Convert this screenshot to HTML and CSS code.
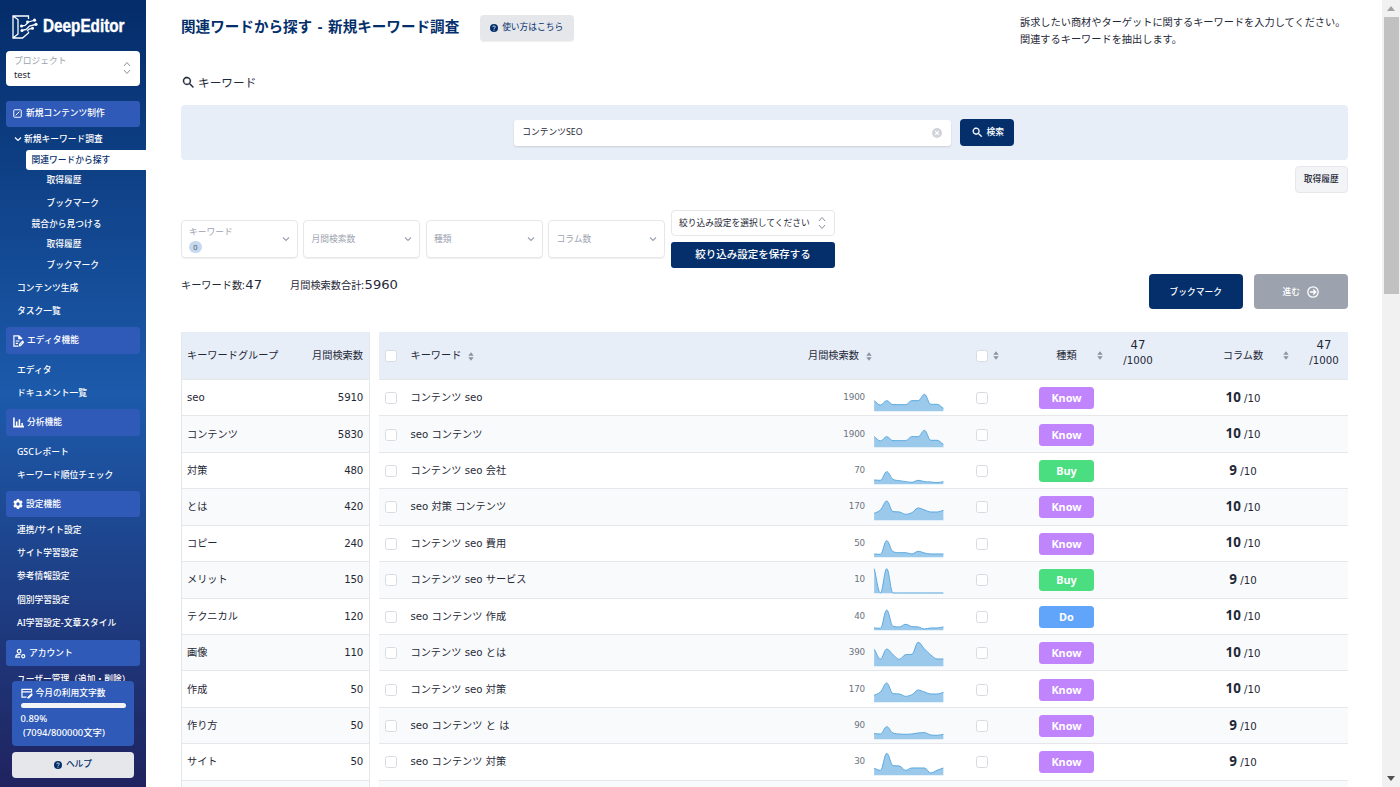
FILE: index.html
```html
<!DOCTYPE html>
<html lang="ja">
  <head>
    <meta charset="utf-8">
    <title>関連ワードから探す - DeepEditor</title>
    <link rel="stylesheet" href="styles.css">
  </head>

  <body>
    <svg class="defs">
      <symbol id="search" viewBox="0 0 24 24"><path d="M15.500 14h-.8l-.3-.3A6.500 6.500 0 1 0 13.700 14.400l.3.300v.8l5 5 1.500-1.500zm-6 0a4.500 4.500 0 1 1 0-9 4.500 4.500 0 0 1 0 9z" stroke="currentColor" stroke-width=".4"/></symbol>
      <symbol id="question" viewBox="0 0 16 16"><circle cx="8" cy="8" r="8"/><path d="M5.500 6.200a2.500 2.300 0 1 1 3.700 2Q8 8.800 8 9.800M8 11.300v2" fill="none" stroke="#e5e7eb" stroke-width="1.900"/></symbol>
      <symbol id="sort" viewBox="0 0 6 10"><path d="M0 4.200 3 .4l3 3.800zM0 5.800h6L3 9.600z"/></symbol>
      <symbol id="updown" viewBox="0 0 8 14"><path d="M1 5l3-3.500L7 5M1 9l3 3.500L7 9" fill="none" stroke="currentColor"/></symbol>
      <symbol id="down" viewBox="0 0 8 8"><path d="M1 2.500l3 3 3-3" fill="none" stroke="currentColor" stroke-width="1.200"/></symbol>
    </svg>

    <div class="app">
      <aside class="sidebar">
        <div class="logo">
          <svg class="outline" viewBox="0 0 26 24" width="26" height="24">
            <path d="M16.500 4V1H1v22h9.500l6-5v-1.500M1 1l5 3.500v14.500L1 23" />
            <path d="M9 11l4-.5 3.500-3.500 5-1.500M10 15.500l4-1 3.500-3.500 6-1.500M15 16l2-2 3.500-.7" />
            <g class="solid"><circle cx="9.500" cy="11" r="1.500"/><circle cx="10" cy="15.500" r="1.500"/><circle cx="22.500" cy="5.200" r="1.600"/><circle cx="24" cy="9.300" r="1.600"/><circle cx="15.500" cy="7" r="1.400"/><circle cx="20.500" cy="13.300" r="1.500"/></g>
          </svg>
          <span>DeepEditor</span>
        </div>

        <div class="project">
          <div>
            <div class="project-label">プロジェクト</div>
            <div>test</div>
          </div>
          <svg class="updown"><use href="#updown"/></svg>
        </div>

        <nav class="nav">
          <div class="section first">
            <svg class="outline" viewBox="0 0 12 12" width="9" height="9"><rect x="1" y="1" width="10" height="10" rx="1"/><path d="M3.500 8.500 8.500 3.500"/></svg>
            新規コンテンツ制作
          </div>
          <div class="item parent"><svg width="8" height="8"><use href="#down"/></svg>新規キーワード調査</div>
          <div class="item selected">関連ワードから探す</div>
          <div class="item leaf after-selected">取得履歴</div>
          <div class="item leaf wide">ブックマーク</div>
          <div class="item sub">競合から見つける</div>
          <div class="item leaf">取得履歴</div>
          <div class="item leaf">ブックマーク</div>
          <div class="item">コンテンツ生成</div>
          <div class="item">タスク一覧</div>

          <div class="section">
            <svg class="outline" viewBox="0 0 12 13" width="11" height="12"><path d="M9.500 4.500V3.800L6.500 1H1v11h4.500M6.300 1v3h3M3 6.500h4M3 9h2.500"/><path d="M6.800 11.800l.4-1.800 3.300-3.300 1 1.200-3.200 3.400z"/></svg>
            エディタ機能
          </div>
          <div class="item start">エディタ</div>
          <div class="item">ドキュメント一覧</div>

          <div class="section">
            <svg class="outline bars" viewBox="0 0 12 11" width="11" height="11"><path d="M1 0v10h11M4 4.500V9M7 2v7M10 6v3"/></svg>
            分析機能
          </div>
          <div class="item start">GSCレポート</div>
          <div class="item">キーワード順位チェック</div>

          <div class="section">
            <svg viewBox="0 0 12 12" width="10" height="10"><path fill-rule="evenodd" d="M4.700 0h2.600l.4 1.600 1 .6 1.600-.5 1.300 2.300-1.200 1.200v1.600l1.200 1.200-1.300 2.300-1.600-.5-1 .6-.4 1.600H4.700l-.4-1.600-1-.6-1.600.5L.400 8l1.200-1.200V5.200L.400 4l1.300-2.300 1.600.5 1-.6zM6 4a2 2 0 1 0 0 4 2 2 0 0 0 0-4z"/></svg>
            設定機能
          </div>
          <div class="item settings-start">連携/サイト設定</div>
          <div class="item">サイト学習設定</div>
          <div class="item">参考情報設定</div>
          <div class="item">個別学習設定</div>
          <div class="item">AI学習設定-文章スタイル</div>

          <div class="section account">
            <svg class="outline" viewBox="0 0 12 12" width="11" height="11"><circle cx="4.500" cy="3.500" r="2"/><path d="M5.500 10H.800Q.800 7 4.500 7H6"/><circle cx="9" cy="9" r="1.700"/></svg>
            アカウント
          </div>
          <div class="item user">ユーザー管理（追加・削除）</div>
        </nav>

        <div class="usage">
          <div class="usage-title">
            <svg class="outline" viewBox="0 0 13 12" width="12" height="11"><path d="M6 10H1V1.500h10.500V5M1 4.300h10.500"/><path d="M7 10.800 12 5.800M7 10.800h1.500L12.500 7"/></svg>
            今月の利用文字数
          </div>
          <div class="bar"></div>
          <div class="usage-text">0.89%</div>
          <div class="usage-text count">(7094/800000文字)</div>
        </div>
        <div class="help"><svg width="8" height="8"><use href="#question"/></svg>ヘルプ</div>
      </aside>

      <main class="main">
        <header class="top">
          <h1>関連ワードから探す - 新規キーワード調査</h1>
          <button class="howto"><svg width="8" height="8"><use href="#question"/></svg>使い方はこちら</button>
          <p class="lead">訴求したい商材やターゲットに関するキーワードを入力してください。<br>関連するキーワードを抽出します。</p>
        </header>

        <div class="field-label"><svg width="15" height="15"><use href="#search"/></svg>キーワード</div>
        <div class="search-panel">
          <div class="search-input">
            コンテンツSEO
            <svg class="clear" viewBox="0 0 10 10" width="10" height="10"><circle cx="5" cy="5" r="5"/><path d="M3.200 3.200l3.600 3.600M6.800 3.200 3.200 6.800" stroke="#fff" stroke-width="1.200"/></svg>
          </div>
          <button class="primary search-button"><svg width="13" height="13"><use href="#search"/></svg>検索</button>
        </div>
        <div class="history-row"><button class="history">取得履歴</button></div>

        <div class="filters">
          <div class="filter">
            <div>キーワード<span class="pill">0</span></div>
            <svg width="8" height="8"><use href="#down"/></svg>
          </div>
          <div class="filter">月間検索数<svg width="8" height="8"><use href="#down"/></svg></div>
          <div class="filter">種類<svg width="8" height="8"><use href="#down"/></svg></div>
          <div class="filter">コラム数<svg width="8" height="8"><use href="#down"/></svg></div>
          <div class="preset">
            <div class="preset-select">絞り込み設定を選択してください<svg class="updown"><use href="#updown"/></svg></div>
            <button class="primary preset-save">絞り込み設定を保存する</button>
          </div>
        </div>

        <div class="summary">
          <div>キーワード数:<span class="big">47</span></div>
          <div>月間検索数合計:<span class="big">5960</span></div>
          <button class="primary action">ブックマーク</button>
          <button class="action disabled">進む
            <svg class="outline" viewBox="0 0 12 12" width="12" height="12"><circle cx="6" cy="6" r="5.200"/><path d="M3 6h5.500M6.300 3.500 8.800 6 6.300 8.500"/></svg>
          </button>
        </div>

        <div class="tables">
          <div class="groups" id="groups">
            <div class="group head"><span>キーワードグループ</span><span>月間検索数</span></div>
          </div>
          <div class="keywords" id="keywords">
            <div class="row head">
              <i class="check"></i>
              <span class="word">キーワード<svg class="sort"><use href="#sort"/></svg></span>
              <span class="volume-head">月間検索数<svg class="sort"><use href="#sort"/></svg></span>
              <span class="pick"><i class="check"></i><svg class="sort"><use href="#sort"/></svg></span>
              <span class="type">種類</span>
              <svg class="sort type-sort"><use href="#sort"/></svg>
              <span class="limit"><b>47</b>/1000</span>
              <span class="columns">コラム数</span>
              <svg class="sort columns-sort"><use href="#sort"/></svg>
              <span class="limit last"><b>47</b>/1000</span>
            </div>
          </div>
        </div>
      </main>

      <div class="scrollbar">
        <svg class="scroll-up" viewBox="0 0 8 5" width="8" height="5"><path d="M0 5 4 0l4 5z"/></svg>
        <div class="thumb"></div>
        <svg class="scroll-down" viewBox="0 0 8 5" width="8" height="5"><path d="M0 0h8L4 5z"/></svg>
      </div>
    </div>

    <script>
      const groups = [
        ['seo', 5910], ['コンテンツ', 5830], ['対策', 480], ['とは', 420], ['コピー', 240], ['メリット', 150],
        ['テクニカル', 120], ['画像', 110], ['作成', 50], ['作り方', 50], ['サイト', 50], ['', '']
      ];

      const high = [32, 19, 32, 20, 20, 20, 32, 32, 51, 21, 21, 9];
      const middle = [21, 31, 58, 26, 25, 18, 23, 37, 31, 25, 25, 30];
      const keywords = [
        ['コンテンツ seo', 1900, 'Know', 10, high],
        ['seo コンテンツ', 1900, 'Know', 10, high],
        ['コンテンツ seo 会社', 70, 'Buy', 9, [13, 12, 38, 15, 11, 8, 6, 12, 8, 7, 5, 8]],
        ['seo 対策 コンテンツ', 170, 'Know', 10, middle],
        ['コンテンツ seo 費用', 50, 'Know', 10, [10, 9, 50, 17, 14, 14, 10, 18, 13, 10, 10, 10]],
        ['コンテンツ seo サービス', 10, 'Buy', 9, [74, 1, 74, 1, 1, 1, 1, 1, 1, 1, 1, 1]],
        ['seo コンテンツ 作成', 40, 'Do', 10, [7, 6, 61, 12, 10, 18, 11, 10, 4, 7, 7, 10]],
        ['コンテンツ seo とは', 390, 'Know', 10, [51, 22, 52, 35, 21, 35, 36, 72, 52, 34, 22, 22]],
        ['コンテンツ seo 対策', 170, 'Know', 10, middle],
        ['seo コンテンツ と は', 90, 'Know', 9, [17, 16, 38, 19, 16, 15, 16, 19, 20, 13, 12, 15]],
        ['seo コンテンツ 対策', 30, 'Know', 9, [21, 15, 66, 29, 28, 15, 22, 22, 22, 7, 15, 22]]
      ];

      // flat at peaks and valleys, otherwise the mean slope of both sides
      function slope(values, i) {
        if (i == 0) return values[1] - values[0];
        if (i == values.length - 1) return values[i] - values[i - 1];
        const before = values[i] - values[i - 1];
        const after = values[i + 1] - values[i];
        if (before * after <= 0) return 0;
        return Math.sign(before) * Math.min(Math.abs(before + after) / 2, 3 * Math.abs(before), 3 * Math.abs(after));
      }

      // monthly trend as a smoothed area, one point per month
      function sparkline(values) {
        const step = 208 / 11;
        let line = 'M0 ' + (76 - values[0]);
        for (let i = 1; i < values.length; i++) {
          const y1 = 76 - values[i - 1] - slope(values, i - 1) / 3;
          const y2 = 76 - values[i] + slope(values, i) / 3;
          line += ` C${(i - 0.62) * step} ${y1} ${(i - 0.38) * step} ${y2} ${i * step} ${76 - values[i]}`;
        }
        return `<svg class="spark" viewBox="0 0 208 76"><path class="area" d="${line} V76 H0z"/><path class="line" d="${line}"/></svg>`;
      }

      document.querySelector('#groups').insertAdjacentHTML('beforeend', groups.map(([name, volume]) =>
        `<div class="group"><span>${name}</span><span class="num">${volume}</span></div>`).join(''));

      document.querySelector('#keywords').insertAdjacentHTML('beforeend', keywords.map(([word, volume, type, count, trend]) =>
        `<div class="row">
          <i class="check"></i>
          <span class="word">${word}</span>
          <span class="volume">${volume}</span>
          ${sparkline(trend)}
          <span class="pick"><i class="check"></i></span>
          <span class="type badge ${type.toLowerCase()}">${type}</span>
          <span class="columns"><b>${count}</b> /10</span>
        </div>`).join('') + '<div class="row"></div>');
    </script>
  </body>
</html>
```
FILE: styles.css
```css
* {
  box-sizing: border-box;
}

body {
  margin: 0;
  overflow: hidden;
  background: #fff;
  color: #1f2937;
  font-family: "Noto Sans", "Noto Sans CJK JP", sans-serif;
  font-size: 8.750px;
  line-height: 1.5;
}

button {
  border: 0;
  padding: 0;
  font: inherit;
  color: inherit;
  display: flex;
  align-items: center;
  justify-content: center;
}

svg {
  fill: currentColor;
  flex: none;
}

.outline {
  fill: none;
  stroke: #fff;
  stroke-width: 1.300;
}

.bars {
  stroke-width: 1.700;
}

.defs {
  display: none;
}

.app {
  display: flex;
  height: 787px;
}

/* sidebar */

.sidebar {
  width: 146px;
  height: 787px;
  display: flex;
  flex-direction: column;
  flex: none;
  background: linear-gradient(#042c69, #1c5aab 50%, #20235f);
  color: #fff;
  font-weight: 500;
}

.logo {
  display: flex;
  align-items: center;
  gap: 5px;
  height: 50.500px;
  padding: 3px 0 0 12px;
}

.logo .solid {
  fill: #fff;
  stroke: none;
}

.logo span {
  font: bold 17.800px "Liberation Sans", sans-serif;
  -webkit-text-stroke: .4px #fff;
  transform: scaleX(.86);
  transform-origin: left;
}

.project {
  display: flex;
  justify-content: space-between;
  align-items: center;
  flex: none;
  margin: 0 6px 15px;
  padding: 0 9px 0 8px;
  height: 35px;
  border-radius: 4px;
  background: #fff;
  color: #1f2937;
  line-height: 13px;
  font-weight: 400;
}

.project > div {
  font-size: 9.300px;
}

.project-label {
  color: #9ca3af;
  font-size: 8.750px;
}

.updown {
  width: 8px;
  height: 14px;
  color: #8b93a0;
}

.nav {
  flex: 1;
  min-height: 0;
  overflow: hidden;
}

.section {
  display: flex;
  align-items: center;
  gap: 3px;
  height: 26.200px;
  margin: 8.200px 6px 0;
  padding-left: 7px;
  border-radius: 3px;
  background: #2f5ab7;
}

.section.first {
  gap: 4px;
  margin-top: 0;
}

.item {
  height: 16px;
  line-height: 17px;
  margin-top: 7.300px;
  padding-left: 17px;
  white-space: nowrap;
}

.parent {
  display: flex;
  align-items: center;
  gap: 2px;
  margin-top: 4.500px;
  padding-left: 14px;
}

.selected {
  height: 20.500px;
  line-height: 20px;
  margin: 2.500px 0 0 26px;
  padding-left: 5.500px;
  border-radius: 3px 0 0 3px;
  background: #fff;
  color: #042f6b;
}

.leaf {
  margin-top: 4.500px;
  padding-left: 46.500px;
}

.leaf.after-selected {
  margin-top: 2px;
}

.leaf.wide {
  margin-top: 7px;
}

.sub {
  margin-top: 4.500px;
  padding-left: 31.500px;
}

.start {
  margin-top: 8.200px;
}

.settings-start {
  margin-top: 4.500px;
}

.section.account {
  margin-top: 9px;
  padding-left: 9px;
}

.user {
  margin-top: 4.500px;
}

.usage {
  flex: none;
  height: 65px;
  margin: 0 12px 6px;
  padding: 4px 8.500px;
  border-radius: 4px;
  background: #2f5ab7;
}

.usage-title {
  display: flex;
  align-items: center;
  gap: 3px;
  height: 17px;
}

.bar {
  height: 5px;
  margin-top: 1px;
  border-radius: 3px;
  background: #f3f4f6;
}

.usage-text {
  height: 14.500px;
  line-height: 15px;
  font-size: 9.400px;
  margin-top: 2.500px;
}

.usage-text.count {
  margin-top: 0;
  padding-left: 2.500px;
}

.help {
  display: flex;
  flex: none;
  align-items: center;
  justify-content: center;
  gap: 4px;
  height: 26px;
  margin: 0 12px 9px;
  border-radius: 4px;
  background: #e5e7eb;
  color: #042f6b;
}

/* main */

.main {
  width: 1236px;
  padding: 14.500px 34.500px 0 35px;
  overflow: hidden;
}

.top {
  display: flex;
  height: 60px;
}

h1 {
  margin: 0;
  width: 299px;
  white-space: nowrap;
  font-size: 14.580px;
  line-height: 23px;
  word-spacing: 1.800px;
  color: #042f6b;
}

.howto {
  gap: 4px;
  width: 93.500px;
  height: 26px;
  border-radius: 4px;
  background: #e5e7eb;
  color: #042f6b;
  box-shadow: 0 1px 1px #0001;
}

.lead {
  margin: -1px 0 0 auto;
  width: 327.500px;
  font-size: 10.200px;
  line-height: 17.500px;
  white-space: nowrap;
}

.field-label {
  display: flex;
  align-items: center;
  gap: 2px;
  height: 16px;
  font-size: 11.670px;
}

.search-panel {
  display: flex;
  align-items: center;
  justify-content: center;
  gap: 9px;
  height: 55px;
  margin-top: 14.500px;
  border-radius: 4px;
  background: #e8eef8;
}

.search-input {
  display: flex;
  align-items: center;
  justify-content: space-between;
  width: 437px;
  height: 26px;
  padding: 0 9px 0 8px;
  border-radius: 3px;
  background: #fff;
  box-shadow: 0 1px 2px #0002;
}

.clear {
  color: #d1d5db;
}

.primary {
  background: #042f6b;
  color: #fff;
  font-weight: 500;
}

.search-button {
  gap: 3px;
  width: 54px;
  height: 26.500px;
  border-radius: 4px;
}

.history-row {
  display: flex;
  justify-content: flex-end;
  height: 50px;
  padding-top: 6px;
}

.history {
  width: 52.500px;
  height: 26.500px;
  border: 1px solid #e5e7eb;
  border-radius: 4px;
  background: #f3f4f6;
  font-weight: 500;
}

.filters {
  display: flex;
  align-items: center;
  gap: 5.800px;
  height: 58.500px;
}

.filter {
  display: flex;
  align-items: center;
  justify-content: space-between;
  width: 116.700px;
  height: 38px;
  padding: 0 7px;
  border: 1px solid #e5e7eb;
  border-radius: 4px;
  box-shadow: 0 1px 1px #0001;
  color: #9ca3af;
}

.pill {
  display: block;
  width: 13px;
  height: 12px;
  margin-top: 2px;
  border-radius: 6px;
  background: #c6d8ef;
  color: #4b5563;
  font-size: 7.500px;
  line-height: 12px;
  text-align: center;
}

.preset {
  width: 164px;
}

.preset-select {
  display: flex;
  align-items: center;
  justify-content: space-between;
  height: 26px;
  padding: 0 8px 0 7px;
  border: 1px solid #e5e7eb;
  border-radius: 4px;
}

.preset-save {
  width: 164px;
  height: 26.500px;
  margin-top: 5.500px;
  border-radius: 3px;
  font-size: 10.500px;
}

.summary {
  display: flex;
  gap: 28px;
  height: 63.500px;
  padding-top: 5.500px;
  font-size: 10.200px;
  line-height: 22px;
}

.big {
  margin-left: .5px;
  font-family: "DejaVu Sans", sans-serif;
  font-size: 13.100px;
}

.action {
  width: 93.500px;
  height: 35px;
  margin-left: auto;
  border-radius: 4px;
  font-size: 8.750px;
  font-weight: 500;
}

.action.disabled {
  gap: 7px;
  margin-left: -16.500px;
  background: #9ca3af;
  color: #fff;
}

/* tables */

.tables {
  display: flex;
  gap: 9px;
  font-family: "DejaVu Sans", "Noto Sans CJK JP", sans-serif;
  font-size: 10.200px;
  line-height: 15px;
}

.groups {
  width: 189px;
  flex: none;
  border: solid #e5e7eb;
  border-width: 0 1px;
}

.group {
  display: flex;
  align-items: center;
  justify-content: space-between;
  height: 36.430px;
  padding: 0 6px 0 5px;
  border-bottom: 1px solid #e5e7eb;
}

.num {
  letter-spacing: -.2px;
}

.keywords {
  width: 968.500px;
}

.row {
  display: grid;
  grid-template-columns: 24px 397px 69px 81px 64px 25px 55px 12px 64px 38px 70px 16px 53.500px;
  grid-template-rows: 100%;
  align-items: center;
  height: 36.430px;
  border-bottom: 1px solid #e5e7eb;
}

.group:nth-child(odd),
.row:nth-child(odd) {
  background: #f9fafb;
}

.group.head,
.row.head {
  height: 48px;
  background: #e8eef8;
}

.check {
  display: block;
  width: 12px;
  height: 12px;
  margin: 1px 0 0 6px;
  border: 1px solid #d8dbe1;
  border-radius: 2.500px;
  background: #fff;
}

.word {
  padding-left: 7.500px;
}

.sort {
  width: 6px;
  height: 9px;
  color: #8b93a0;
}

.word .sort,
.volume-head .sort {
  margin-left: 7px;
  vertical-align: -1.500px;
}

.volume-head {
  grid-column: 3 / 5;
  padding-left: 8px;
}

.volume {
  padding-right: 4px;
  text-align: right;
  font-size: 8.750px;
  letter-spacing: -.15px;
  color: #6b7280;
}

.spark {
  width: 69.500px;
  height: 25.300px;
  margin: 2px 0 0 5.300px;
  overflow: visible;
}

.spark .area {
  fill: #9ac9ec;
}

.spark .line {
  fill: none;
  stroke: #5aa9dd;
  stroke-width: 3;
}

.pick {
  grid-column: 5;
  display: flex;
  align-items: center;
  gap: 5px;
  padding-left: 20px;
}

.type {
  grid-column: 7;
  text-align: center;
}

.badge {
  height: 22px;
  margin-top: 1px;
  border-radius: 3.500px;
  color: #fff;
  font: bold 10.900px/21px "Noto Sans", sans-serif;
}

.know {
  background: #c084fc;
}

.buy {
  background: #4ade80;
}

.do {
  background: #60a5fa;
}

.type-sort {
  grid-column: 8;
  margin-left: 3px;
}

.limit {
  grid-column: 9;
  text-align: center;
}

.limit b {
  display: block;
  margin-top: -5px;
  font-size: 11.670px;
  font-weight: 400;
}

.limit.last {
  grid-column: 13;
  padding-left: 6.500px;
}

.columns {
  grid-column: 11;
  text-align: center;
}

.columns b {
  font-family: "Noto Sans", sans-serif;
  font-size: 13.400px;
}

.columns-sort {
  grid-column: 12;
  margin-left: 5px;
}

/* scrollbar */

.scrollbar {
  display: flex;
  flex-direction: column;
  align-items: center;
  width: 18px;
  padding: 6px 0;
  background: #f1f1f1;
}

.thumb {
  width: 15px;
  height: 277px;
  margin-top: 6px;
  background: #c1c1c1;
}

.scroll-up {
  color: #a3a3a3;
}

.scroll-down {
  margin-top: auto;
  color: #505050;
}
```
